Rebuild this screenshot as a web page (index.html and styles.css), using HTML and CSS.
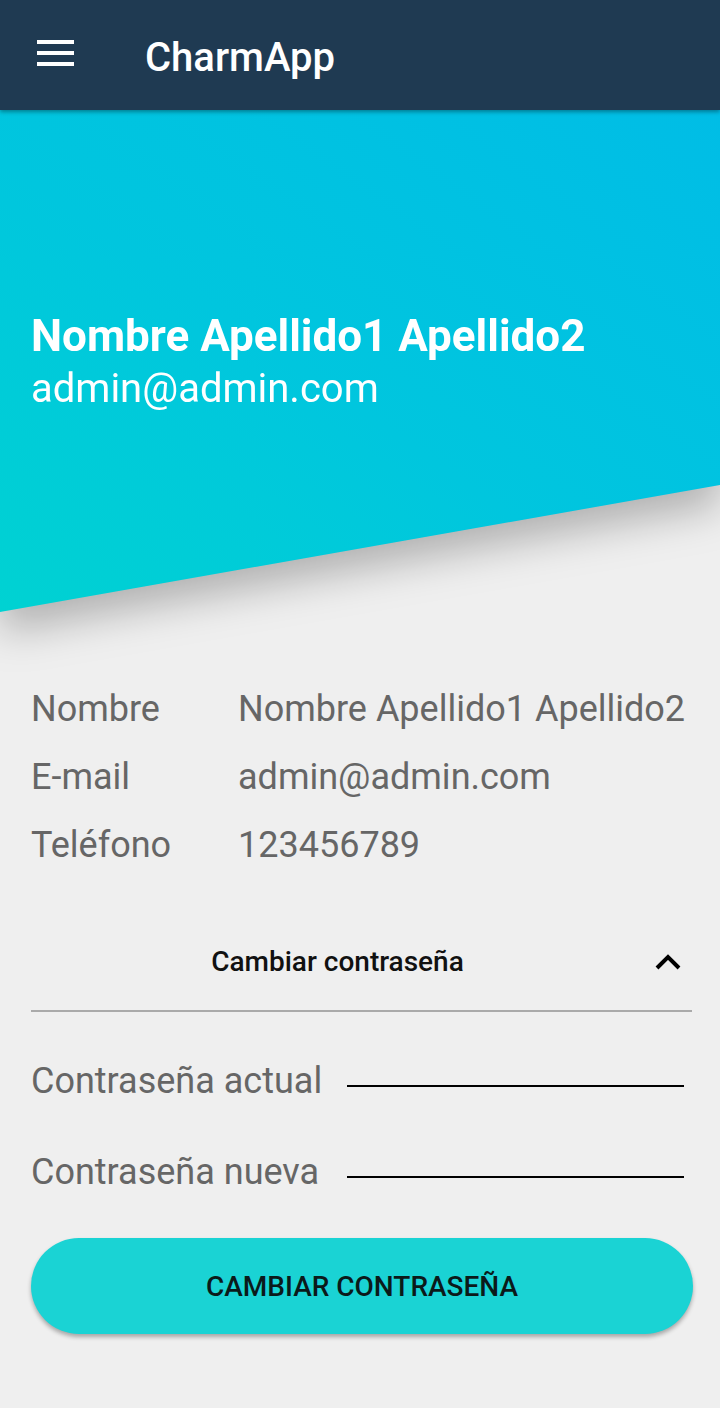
FILE: index.html
```html
<!DOCTYPE html>
<html lang="es">
<head>
<meta charset="utf-8">
<title>CharmApp</title>
<link rel="stylesheet" href="styles.css">
</head>
<body>
<div class="app">
  <header class="appbar">
    <button class="menu-btn" aria-label="Menú">
      <span></span><span></span><span></span>
    </button>
    <h1 class="title">CharmApp</h1>
  </header>

  <div class="hero-wrap">
    <section class="hero">
      <div class="hero-name">Nombre Apellido1 Apellido2</div>
      <div class="hero-email">admin@admin.com</div>
    </section>
  </div>

  <main class="content">
    <dl class="details">
      <div class="row"><dt>Nombre</dt><dd>Nombre Apellido1 Apellido2</dd></div>
      <div class="row"><dt>E-mail</dt><dd>admin@admin.com</dd></div>
      <div class="row"><dt>Teléfono</dt><dd>123456789</dd></div>
    </dl>

    <div class="panel-head">
      <span class="panel-title">Cambiar contraseña</span>
      <svg class="chevron" width="28" height="18" viewBox="0 0 28 18" aria-hidden="true">
        <polyline points="3,15 14,4 25,15" fill="none" stroke="#000" stroke-width="4"/>
      </svg>
    </div>

    <div class="field">
      <label class="field-label">Contraseña actual</label>
      <span class="field-input"></span>
    </div>
    <div class="field">
      <label class="field-label">Contraseña nueva</label>
      <span class="field-input"></span>
    </div>

    <button class="submit">CAMBIAR CONTRASEÑA</button>
  </main>
</div>
</body>
</html>
```
FILE: styles.css
```css
* { box-sizing: border-box; }
html, body { margin: 0; padding: 0; }
body {
  background: #efefef;
  font-family: Roboto, "Liberation Sans", sans-serif;
  width: 720px;
  height: 1408px;
  overflow: hidden;
}
.app { display: flex; flex-direction: column; }

.appbar {
  height: 110px;
  background: #1f3a52;
  display: flex;
  align-items: center;
  position: relative;
  z-index: 2;
  box-shadow: 0 2px 4px rgba(0,0,0,0.35);
}
.menu-btn {
  width: 37px;
  height: 26px;
  margin-left: 37px;
  padding: 0;
  border: 0;
  background: none;
  display: flex;
  flex-direction: column;
  justify-content: space-between;
  margin-top: -4px;
}
.menu-btn span { display: block; height: 4px; background: #fff; }
.title {
  margin: 5px 0 0 71px;
  color: #fff;
  font-size: 40px;
  font-weight: 500;
  line-height: 47px;
}

.hero-wrap {
  filter: drop-shadow(0 20px 20px rgba(0,0,0,0.26));
  position: relative;
  z-index: 1;
}
.hero {
  height: 502px;
  background: linear-gradient(to top right, #00d2d2 0%, #00c6de 45%, #00bde6 100%);
  clip-path: polygon(0 0, 100% 0, 100% 375px, 0 502px);
  padding: 201px 31px 0;
  color: #fff;
}
.hero-name { font-size: 44px; font-weight: 700; line-height: 50px; }
.hero-email { font-size: 40px; font-weight: 400; line-height: 56px; }

.content { padding: 63px 28px 0 31px; }
.details { margin: 0; }
.row { display: flex; height: 68px; align-items: center; }
.row dt, .row dd {
  margin: 0;
  font-size: 36px;
  color: #666;
}
.row dt { width: 207px; }

.panel-head {
  height: 133px;
  padding-top: 67px;
  border-bottom: 2px solid #aaa;
  display: flex;
  align-items: flex-start;
  justify-content: center;
  position: relative;
}
.panel-title {
  font-size: 28px;
  line-height: 32px;
  font-weight: 500;
  color: #111;
  margin-left: -48px;
}
.chevron { position: absolute; right: 10px; top: 74px; }

.field { display: flex; align-items: flex-end; height: 91px; }
.field-label {
  width: 316px;
  flex: none;
  font-size: 36px;
  line-height: 42px;
  color: #666;
  margin-bottom: 1px;
  white-space: nowrap;
}
.field-input {
  flex: 1;
  margin: 0 8px 16px 0;
  border-bottom: 2px solid #000;
}

.submit {
  display: block;
  width: 662px;
  height: 96px;
  margin-top: 44px;
  border: 0;
  border-radius: 48px;
  background: #1ad3d4;
  color: #0b1a1a;
  font-family: Roboto, sans-serif;
  font-size: 28px;
  font-weight: 500;
  box-shadow: 0 3px 4px rgba(0,0,0,0.3);
}
```
